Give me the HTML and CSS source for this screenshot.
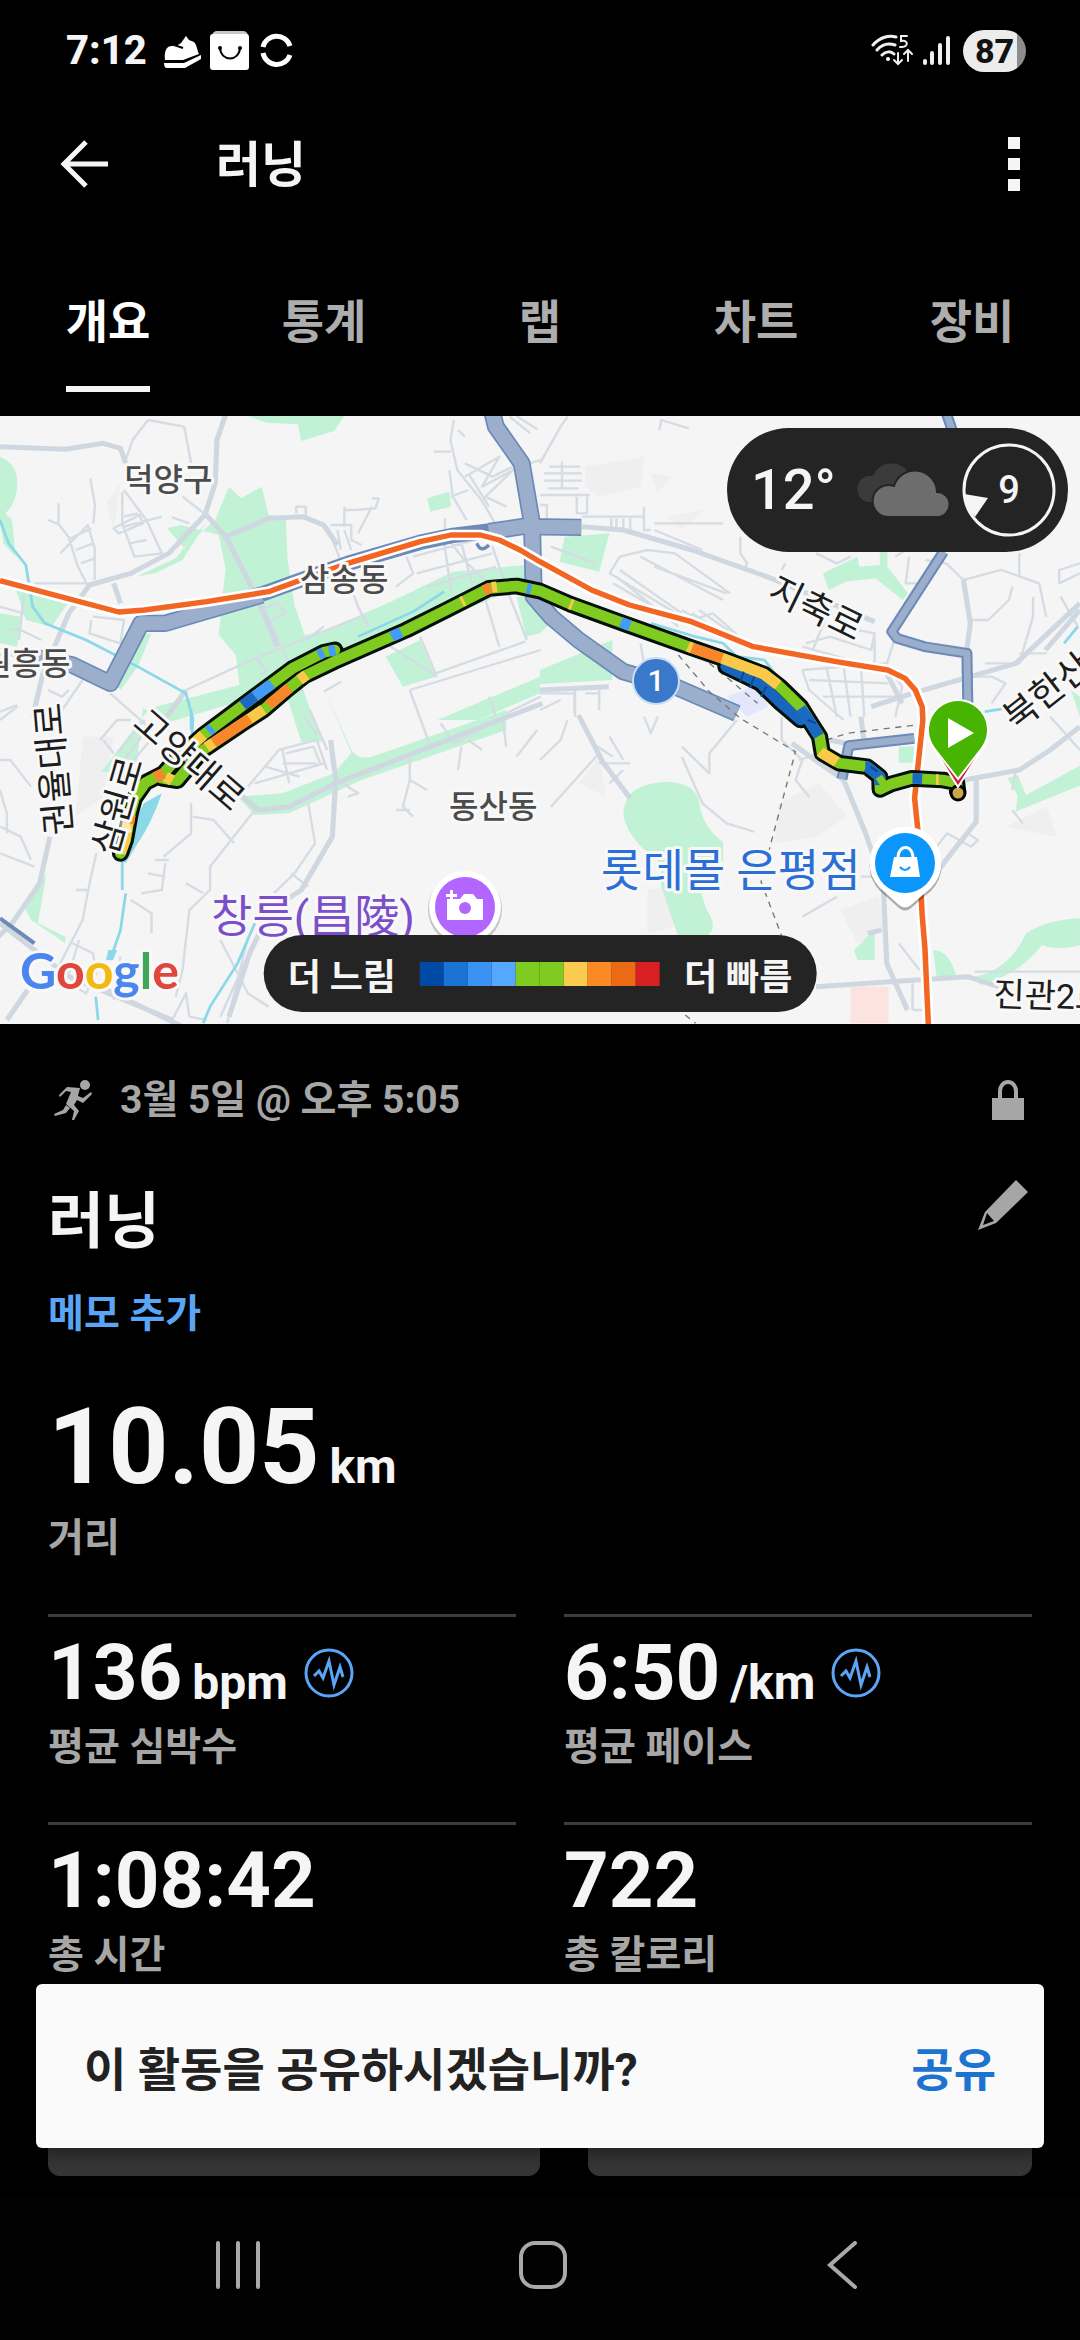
FILE: index.html
```html
<!DOCTYPE html>
<html lang="ko">
<head>
<meta charset="utf-8">
<meta name="viewport" content="width=device-width, initial-scale=1">
<title>러닝</title>
<link rel="stylesheet" href="styles.css">
</head>
<body>
<div class="statusbar">
  <div class="status-group">
    <span class="clock">7:12</span>
    <svg class="status-icons" width="130" height="42" viewBox="0 0 130 42" aria-hidden="true">
      <path fill="#fff" d="M2 30C1 22 3 16 9 16c4 0 7-1 9-3l5-7 3 4 5 2c3 3 3 8 5 12L20 30zM1 33h20l17-8v4L22 38H4c-2 0-3-2-3-5z"/>
      <path d="M11 15l9 3" stroke="#000" stroke-width="2"/>
      <rect x="49" y="1" width="36" height="12" rx="5" fill="#c8c8c8"/>
      <rect x="47" y="4" width="39" height="36" rx="3" fill="#fff"/>
      <path d="M57 18c1 14 19 14 20 0" fill="none" stroke="#000" stroke-width="2"/>
      <circle cx="57" cy="18" r="2"/><circle cx="77" cy="18" r="2"/>
      <path d="M100 17a14 14 0 0 1 27-1M100 23a14 14 0 0 0 27 2" fill="none" stroke="#fff" stroke-width="5"/>
    </svg>
  </div>
  <div class="status-group">
    <svg width="80" height="36" viewBox="0 0 80 36" aria-hidden="true">
      <g fill="none" stroke="#f0f0f0" stroke-width="3" stroke-linecap="round">
        <path d="M2 12C9 4 18 2 25 4M6 17C11 11 18 10 24 12M11 22c4-4 9-4 12-1"/>
        <path d="M27 20v10M23 27l4 4 4-4M37 28V18M33 21l4-4 4 4" stroke-width="2"/>
        <path d="M36 3h-6v5c7-2 8 6 1 6h-2" stroke-width="2"/>
        <path d="M54 28v2M61 20v10M69 12v18M77 5v25" stroke-width="4"/>
      </g>
      <circle cx="17" cy="26" r="2" fill="#fff"/>
    </svg>
    <span class="battery">87</span>
  </div>
</div>

<header class="appbar">
  <button class="icon-button" aria-label="뒤로">
    <svg width="48" height="48" viewBox="0 0 48 48"><path d="M26 2L4 24l22 22M4 24h44" fill="none" stroke="#f5f5f5" stroke-width="5"/></svg>
  </button>
  <h1 class="appbar-title">러닝</h1>
  <button class="icon-button" aria-label="더보기">
    <svg width="12" height="54" viewBox="0 0 12 54"><path d="M0 0h12v12H0zM0 21h12v12H0zM0 42h12v12H0z" fill="#f5f5f5"/></svg>
  </button>
</header>

<nav class="tabs">
  <button class="tab tab-active"><span>개요</span></button>
  <button class="tab"><span>통계</span></button>
  <button class="tab"><span>랩</span></button>
  <button class="tab"><span>차트</span></button>
  <button class="tab"><span>장비</span></button>
</nav>

<main>
<section class="map">
  <svg class="map-canvas" viewBox="0 0 1080 608" role="img" aria-label="경로 지도">
    <rect width="1080" height="608" fill="#f5f5f5"/>
    <g transform="scale(.34435 .33333) translate(0 -18)" fill="none" stroke-linejoin="round">
      <g class="relief">
        <path d="M1700 170l170-30-10 90-120 30-40-30zM1890 190l60 10-40 50zM1940 320l100-20-60 60z"/>
        <path d="M2260 1180l120-60 80 100-90 60-120 20zM1680 1120l60-80 20 120zM1880 1440l150-30-20 130-130 30zM2440 1500l110-40 20 100-80 40zM2920 1250l120-60 30 90zM240 980l90 0-30 180-80 60zM310 280l40-60-20 140z"/>
      </g>
      <g class="park">
        <path d="M720 18h280l-30 45-95 30-10-50-90-5zM0 140q50 20 50 80t-35 90l20 20 10 110-35-40-10-60zM40 520l170 40-60 90-75-20zM0 610l60 10-10 90-50-10z"/>
        <path d="M625 330l40-100 35 35 60-35 20 85 50 10 5 120 20 140 30 90 50-10 200-90 180-90 210-20v60l-260 110-330 150-60 40 60 170h-60l-50-160-330 100-80-40-20 190h-100l80-110 60-80 260-70-10-90-50-60 20-200-20-100-110-30-40 10 50 60-15 10z"/>
        <path d="M600 335l-90 110-115 55 55-10 80-40zM1240 265l65-20 5 45-60 15zM1120 740l100-50 45 110-95 30zM1500 560l68 0v110l-40 10zM440 670l-40 100-50 70-15-20 60-140zM1270 930l298-130v50l-180 80z"/>
        <path d="M1640 380l130-10-30 115-115-30zM2390 490l60-30 40-20 5 30 60-5 0-50 22 0 0 55 60 80-15 20-80-65-85 10-50 25zM1568 780l210-90 0 120-210 12zM1700 740l50-10 30 60zM3110 840l26 20v60zM1568 620l30 20-30 30z"/>
        <path d="M940 830l80 190q20 30 60 20l390-140v60l-420 150-210 100-100 5-50-55 130-10 150-60 50-60z"/>
        <path d="M1820 1170q20-50 120-55 80 5 90 60 10 80 70 120v60h-90q20 70 40 140 40 60 0 85h-80l-50-150 0-70q-110-80-110-160zM2610 1010h50v48h-50zM2950 1205l190-80v-60l-160 90-25-60-30 10 30 50zM2480 1620l60-60v90h-50zM2710 1620q50 0 70 90l-60-10zM2830 1700q100-20 150-130 60-40 156-45v80q-60 20-110 0-60 80-150 110l-30 10zM70 1490l65-100-25 150 80 40 0 20-100-70z"/>
      </g>
      <path d="M2470 1730h110v110h-110z" fill="#fde3e0"/><path d="M2110 860l100-40 20 70-60 30z" fill="#e2e7fb"/>

      <g class="street">
        <path d="M430 30L535 50 555 160M650 18M430 30L385 90 365 150M262 205l14 80-5 55M170 280v62l30 40 25 85 30 60M140 330l32 14M175 430l80-85 20 70v95M205 385l60-30M220 420l50-20M235 460l40-15M355 245v95l35 100 80-10-45-100-65-90M330 355l75-40 10 25-70 30zM360 350l55-15 55-15M375 400l50-10M360 320l40-10M530 260l75 60M500 322l50 18"/>
        <path d="M660 378l100 200 60 140 60 130M750 600l55-20 25 30-60 30M540 840L740 745 1060 615M745 745l30 40-20 10M890 690l50-40M950 350l20 50 70 190 30 60M860 310v-20h28v30M960 345h60l0 45 30 15M1000 290v60M1000 300h30l60-5 10-30h-20M1040 370l40-80M980 360l10 60M1000 360l20 60M940 845l50-30"/>
        <path d="M1318 30l-10 60 20 90 70 90 40 70M1330 60l20 20M1260 125h50M1305 180l10 80 40 70M1350 200l100-60-50 90 90-50-80 80 60 30M1350 160l80 40 60-30M1360 190l60 100M1310 260l50-20M1292 325v50l60 80 60 60M1200 440l180-50M1210 490l220-60M1240 530l200-60M1290 400l20 140M1340 400l30 120M1180 440l20 50-50 40M1568 150l-30 10M1480 20l60 50M1500 18l60 40"/>
        <path d="M1040 590l30 60M1190 840l380-120M1190 840l60 170M1090 680l180 120M1220 680l45 110 260-95M1410 570l40 140M1430 410l50 150 50 130M1420 860l20 60M1470 910l100-50"/>
        <path d="M0 590l70 20M20 660h40l60 30M100 520h150M70 550l-15 140M270 620l90 10-10 70-90-30 5-40M320 850l110 100M180 900l60-90M140 840l40 20 20-20M0 905l50-20"/>
        <path d="M1568 160l60-110 20-30M1632 155v80M1595 170h90M1580 190h110M1580 212h110M1590 235h90M1568 255h145M1568 285h20v50M1675 260v50h30v-50M1690 320h180v-30M1870 290v70h20M1775 325v30M1790 325v30M1810 325v35M1830 325v35M1900 360l140 60M1600 410l130 50M1915 60l5-30 80 25M1900 340l200 0M2150 380l0 50 20 30-10 20"/>
        <path d="M1770 490l30-50 80-20 80 10 80 60 80 60M1770 490l210 130M1790 500l180 150M1800 480l180 130M1780 520l200 120M1860 440l240 130M1900 470l210 80M2010 630l60-20 110 100M1980 600l180 110 140 10M2010 610l130 90M2030 600l110 80"/>
        <path d="M2360 720l60-150M2330 710l240 70M2340 700l70-20 120 40 10-50-50-10M2330 780l240-20 50 70-20 90M2330 780l20 60 100 90M2400 770l30 150M2450 770l20 150M2500 770l10 150M2350 810l230 10M2390 860l230 0M2540 680l0 100M2600 680l-30 100M2640 440l-10 80 60 0M2370 430l60 30 40-20M2600 440l30-20M2270 480l10-20M2960 430v70M2798 510l110-30 110 40 20 100M2798 510l-50-50-60-10M2810 630h60l60-60 10-40M3000 560l0 60-40 140-100 0M2810 800h70l40 20-40 60M3136 460l-60 20 0 40 60-30M3080 560l50 90M2960 730h80"/>
        <path d="M1740 840v60M1568 850h100v60M1670 830v90M1700 850h40M1860 700l10 60M1568 900l60-30"/>
        <path d="M0 930l50-40M0 1050h30l60 80M0 1140l20 70 0 60M0 1250l60 30 30 70M0 1330l100 40M290 990l50-60 40 0M300 990l30 40M340 1030l80-100M360 1050l80-110M380 1060l90-110M555 1180v90l-80 70M560 1220l60 10 60 70M480 1360l-10 80-60 10M430 1390l50 10M450 1350h40M540 1420l50 30M380 1470l60 40 0 60M350 1640l-20 130M210 1600l60 30 10 60-30 60-50-30M230 1590l-30 100M220 1440h40M280 1330l-20 90-20 110-80 160"/>
        <path d="M720 1130l90-110 110-30 30 90M740 1120l200-60M820 1020l20 100M770 1070l100 30M820 1060h100M830 1030l80-20 20 50M880 915l40 60M900 900l50 120M740 1200l-130 170 0 70-60 60-20 180-20 80M895 1180l20 120-60 90-60 60M845 1390l50 40M740 1590l-100 230M720 1580l-60 260M640 1590l80 160 60 40M500 1830l40-80 10 70 50 10"/>
        <path d="M1190 1030v80l-20 80 30 30M1190 1110l50 30M1150 1200h40M1280 940l40 60 70-40M1360 990l40 30M1330 1080l10-70M980 1110l60 40-30 10M1500 1040l60-80M1460 930l10 80"/>
        <path d="M1568 1050l60-60 20-60M1720 1000l60 40M1770 980l40 70M1740 1060h90M1770 1120l40-40M1600 1190l140-160M1980 1010l80 80 0-60 80-100M1980 1040l60 140 70 60 80 25M2270 920l0 70 60 60-20 60 40 50M2320 1050l60-20M1870 920l20 50 20-50M2950 1080l-10 60M2940 1200l30 40M3050 920l86 100M2810 1270l-100 140M2810 1270l30 20-20 20-70-40-60 80M2500 1400h70M2330 1520l100-60M2650 1720v80M2610 1600l60 80M2650 1800h40M2830 1685h306"/>
      </g>

      <g class="road">
        <path d="M0 110l190 8 110-18 50 15 15 45M660 0l-30 90-5 130-30 95-105 115-110 60-120 35-60 85-75 180-30 130M595 310l60 70 60 120 60 130 30 80M655 380l125-55 100-5 60 25 40 60M1690 350l120 10 200 60 230 85M2240 505l300 130"/>
        <path d="M145 1280l-30 140-80 120-60 60M0 1540l200 160 300 130M0 720l60 20M310 1740l220 110M350 580l-20-60M540 840l-70 100M20 1830l60-90"/>
        <path d="M660 1120l90 80 90-10 135-70 500-200 100-40M960 990l15 120-10 170-90 160-90 60-60 130-60 190"/>
        <path d="M1568 840l200-10M1680 915l70 140 80 110M2300 1000l80 60 70 50 60 150 55 160 10 240 60 140M2410 990l90 20M2500 920l10 80M2370 1730l290-20 150-10 90 30M2800 1110l160-30 90-60 86-70M2835 1105l0 130-130 170M2798 510l20 130-20 150M2530 890l120-40 300-90 186-180M2570 780l50 100M2520 1570l40-10M3136 600l-100 120"/>
      </g>

      <g class="water">
        <path d="M0 330l25 70 50 65 20 125 35 50 120 50 150 80 140 80 20 75-5 120-40 80M555 900v60"/>
        <path d="M355 1350v90M365 1450l-15 110-30 90M278 1760l7 70M740 1540l-50 120-80 130-20 50M1040 680l160-75 90-60M1630 560l80 30M1890 640l130 40 80 20 40 40 80 10 60 80M2860 905l60-10M3090 700l40-50"/>
      </g>
      <path d="M470 1150q-30 90-70 150l-35 60-12-10 20-80 45-90zM315 1620h25l-12 30h-20z" fill="#8ad8e8"/>

      <g class="highway-edge">
        <path d="M1428 0l12 50 75 110 30 180 5 220 50 60 80 70 130 95 150 45 180 80"/>
        <path d="M1545 345l-125 20M760 555l-280 85-70 0-90 180-110-55-140-30M1520 350l168 2"/>
        <path d="M1430 362L1310 377 1220 397 1010 460 860 515 740 560" class="highway-narrow"/>
      </g>
      <g class="highway">
        <path d="M1428 0l12 50 75 110 30 180 5 220 50 60 80 70 130 95 150 45 180 80"/>
        <path d="M1545 345l-125 20M760 555l-280 85-70 0-90 180-110-55-140-30M1520 350l168 2"/>
      </g>
      <path d="M1385 400q10 30 35 5" stroke="#6b8ab8" stroke-width="10"/>
      <g class="trunk-edge"><path d="M2745 0l20 60M2740 425l-150 240 15 20 80 25 123 20 3 180M2655 985l-190 22-20 100"/></g>
      <path d="M0 1525l100 75" stroke="#6b8ab8" stroke-width="12"/>
      <g class="trunk"><path d="M2745 0l20 60M2740 425l-150 240 15 20 80 25 123 20 3 180M2655 985l-190 22-20 100"/></g>
      <path d="M1970 735l90 110 90 80 160 100-70 270-30 120 70 190M2060 760l60 50 80 70M2400 990l60-20 200-25M1990 1815l30 25" stroke="#777" stroke-width="4" stroke-dasharray="18 16"/>

      <path class="rail-edge" d="M0 512L345 606 420 600 600 575 780 545 860 515 1010 460 1220 395 1310 375 1395 375 1450 390 1510 420 1568 455 1718 540 1828 585 2008 635 2068 660 2188 710 2428 755 2578 780 2628 805 2658 840 2678 890 2680 930 2663 1095 2656 1165 2665 1255 2678 1515 2686 1615 2696 1845"/>
      <path class="rail" d="M0 512L345 606 420 600 600 575 780 545 860 515 1010 460 1220 395 1310 375 1395 375 1450 390 1510 420 1568 455 1718 540 1828 585 2008 635 2068 660 2188 710 2428 755 2578 780 2628 805 2658 840 2678 890 2680 930 2663 1095 2656 1165 2665 1255 2678 1515 2686 1615 2696 1845"/>

      <g class="route-edge">
        <path d="M350 1330L364 1290 378 1210 390 1165 422 1118 475 1090 505 1055 590 975 700 890 850 775 940 727 972 720 985 745"/>
        <path d="M470 1105L515 1112 590 1020 700 943 765 900 835 838 885 797 970 755 1180 660 1300 598 1420 535 1500 528 1568 543 1658 583 1818 643 2008 713 2098 745 2218 792 2265 830 2325 890 2355 940 2380 980 2388 1030 2438 1060 2518 1070 2555 1100 2556 1138 2588 1122 2648 1105 2738 1110 2778 1118 2781 1145"/>
        <path d="M2108 770L2208 820 2268 880 2325 930"/>
      </g>
      <g class="route">
        <path d="M350 1330L364 1290 378 1210 390 1165 422 1118 475 1090 505 1055 590 975 700 890 850 775 940 727 972 720"/>
        <path d="M2108 770L2208 820 2268 880 2325 930" stroke="#1765bd"/>
        <path d="M470 1105L515 1112 590 1020 700 943 765 900 835 838 885 797 970 755 1180 660 1300 598 1420 535 1500 528 1568 543 1658 583 1818 643 2008 713 2098 745 2218 792 2265 830 2325 890 2355 940 2380 980 2388 1030 2438 1060 2518 1070 2555 1100 2556 1138 2588 1122 2648 1105 2738 1110 2778 1118 2781 1145"/>
      </g>
      <g class="pace">
        <path d="M349 1330L363 1290 376 1210M560 1003L590 975M600 1012L620 998M720 930L765 898M870 810L890 795M480 1100L500 1112M1428 532L1443 530M1340 576L1348 572M1655 582L1663 585M1998 709L2010 714M2095 744L2218 792 2260 825M2382 1025L2388 1030 2430 1056M2718 1109L2726 1109" stroke="#fbc94a"/>
        <path d="M374 1240L378 1215M450 1102L475 1090M620 998L700 943 725 926M780 885L840 834M1405 542L1425 533M2010 714L2097 745" stroke="#f9862a"/>
        <path d="M605 964L617 954M740 859L790 821M925 735L940 727M955 724L974 720M1137 680L1165 667M1530 535L1542 538M1803 637L1830 647" stroke="#439bf7"/>
        <path d="M705 886L740 859M2325 895L2355 940 2378 978M2513 1070L2518 1070 2555 1100 2556 1125M2650 1105L2678 1106" stroke="#1a69c4"/>
      </g>
      <path d="M2160 785l-10 30M2190 800l-12 34M2225 830l-15 30M2345 930l25 10M2528 1070l20 15" stroke="#0e4890" stroke-width="6"/>
      <path d="M2552 1100l20 30" stroke="#7fcb1f" stroke-width="22"/>
      <path d="M520 1010l40 50M350 1210l20 60" stroke="#fff" stroke-opacity=".55" stroke-width="30"/>
    </g>

    <g class="place">
      <text x="124" y="75">덕양구</text><text x="300" y="175">삼송동</text><text x="-18" y="259">원흥동</text><text x="449" y="402">동산동</text>
    </g>
    <g class="road-name">
      <text transform="translate(766 182) rotate(26)">지축로</text>
      <text transform="translate(1016 316) rotate(-38)">북한산로</text>
      <text transform="translate(131 310) rotate(41)">고양대로</text>
      <text transform="translate(116 441) rotate(-74)">삼원로</text>
      <text transform="translate(72 418) rotate(-95)">권율대로</text>
      <text class="small-road" transform="translate(993 590) rotate(2)">진관2로</text>
    </g>
    <text class="poi poi-sight" x="211" y="517">창릉(昌陵)</text>
    <text class="poi poi-shop" x="601" y="471">롯데몰 은평점</text>

    <circle cx="465" cy="493" r="37" fill="#000" opacity=".2"/><circle cx="465" cy="491" r="36" fill="#fff"/><circle cx="465" cy="491" r="30" fill="#b266ff"/>
    <path d="M447 483h13l4-5h9l4 5h6v21h-36zM446 478h4v-4h3v4h4v3h-4v4h-3v-4h-4z" fill="#fff"/><circle cx="465" cy="492" r="6" fill="#b266ff"/>

    <path d="M899 489l-19-17a36 36 0 1 1 51 0l-20 17q-6 5-12 0z" fill="#000" opacity=".3" transform="translate(0 3)"/>
    <path d="M899 489l-19-17a36 36 0 1 1 51 0l-20 17q-6 5-12 0z" fill="#fff"/><circle cx="905" cy="447" r="30" fill="#0b96fb"/>
    <path d="M894 441h23l3 20h-30z" fill="#fff"/><path d="M898 442c0-14 15-14 15 0" fill="none" stroke="#fff" stroke-width="3"/><path d="M900 451q5 6 10 0" fill="none" stroke="#0b96fb" stroke-width="2"/>

    <circle cx="656" cy="265" r="23" fill="#3a78c9" stroke="#c9dcf7" stroke-width="2"/><text class="shield" x="656" y="275">1</text>

    <circle cx="958" cy="377" r="7" fill="#c9a84c" stroke="#000" stroke-width="3"/>
    <path d="M958 371l-24-38a30 30 0 1 1 48 0z" fill="#d51a42" stroke="#fff" stroke-width="2"/>
    <path d="M958 363l-24-31a30 30 0 1 1 48 0z" fill="#46b400" stroke="#fff" stroke-width="2"/><path d="M948 302l26 15-26 15z" fill="#fff"/>

    <text class="google" x="20" y="573"><tspan fill="#4a86ee">G</tspan><tspan fill="#e0473c">o</tspan><tspan fill="#f2b90f">o</tspan><tspan fill="#4a86ee">g</tspan><tspan fill="#3fa757">l</tspan><tspan fill="#e0473c">e</tspan></text>
  </svg>

  <div class="weather">
    <span class="temperature">12°</span>
    <svg width="94" height="54" viewBox="0 0 94 54" aria-hidden="true">
      <path d="M12 39a13 13 0 0 1 5-26 20 20 0 0 1 35-4L20 39z" fill="#3b3b3b"/>
      <path d="M34 54a16 16 0 1 1 4-31 22 22 0 0 1 43 6 12 12 0 0 1 0 25z" fill="#6d6d6d" stroke="#242424" stroke-width="2"/>
    </svg>
    <div class="wind">
      <svg class="wind-ring" width="94" height="94" viewBox="0 0 94 94" aria-hidden="true"><circle cx="47" cy="47" r="45" fill="none" stroke="#f5f5f5" stroke-width="3"/><path d="M2 51l24 4-13 19q-9-9-11-23z" fill="#f5f5f5"/></svg>
      <span>9</span>
    </div>
  </div>

  <div class="legend">
    <span>더 느림</span>
    <div class="scale"><i class="p1"></i><i class="p2"></i><i class="p3"></i><i class="p4"></i><i class="p5"></i><i class="p5"></i><i class="p6"></i><i class="p7"></i><i class="p8"></i><i class="p9"></i></div>
    <span>더 빠름</span>
  </div>
</section>

<section class="summary">
  <div class="meta">
    <svg width="40" height="40" viewBox="0 0 40 40" aria-hidden="true"><circle cx="31" cy="5" r="5" fill="#a6a6a6"/><path d="M13 7l13 1-2 8 5 2 8-6 1 2-9 9-6-3-3 5 5 6-5 9-2 0 2-9-8-7 5-12-5-1-6 6-1-2zM12 25l4 3-4 5-11 3-1-2 9-4z" fill="#a6a6a6"/></svg>
    <p class="date">3월 5일 @ 오후 5:05</p>
    <svg width="32" height="40" viewBox="0 0 32 40" role="img" aria-label="비공개"><path d="M0 18h32v22H0z" fill="#a6a6a6"/><path d="M8 19v-8a8 9 0 0 1 16 0v8" fill="none" stroke="#a6a6a6" stroke-width="4"/></svg>
  </div>
  <div class="title-row">
    <h2 class="title">러닝</h2>
    <button class="icon-button edit" aria-label="편집"><svg width="50" height="50" viewBox="0 0 50 50"><path d="M38 0l12 12-32 31-18 7 7-18zM9 33l-4 12 11-4z" fill="#a6a6a6" fill-rule="evenodd"/></svg></button>
  </div>
  <a class="note" href="#">메모 추가</a>

  <p class="value value-large">10.05 <small>km</small></p>
  <p class="label label-large">거리</p>

  <div class="stats">
    <div class="stat"><p class="value">136 <small>bpm</small><svg class="pulse" width="50" height="50" viewBox="0 0 50 50" aria-hidden="true"><circle cx="25" cy="25" r="23" fill="none" stroke="#5aa5f5" stroke-width="3"/><path d="M10 28l5-5 4 7 6-17 5 24 6-18 3 10" fill="none" stroke="#5aa5f5" stroke-width="3"/></svg></p><p class="label">평균 심박수</p></div>
    <div class="stat"><p class="value">6:50 <small>/km</small><svg class="pulse" width="50" height="50" viewBox="0 0 50 50" aria-hidden="true"><circle cx="25" cy="25" r="23" fill="none" stroke="#5aa5f5" stroke-width="3"/><path d="M10 28l5-5 4 7 6-17 5 24 6-18 3 10" fill="none" stroke="#5aa5f5" stroke-width="3"/></svg></p><p class="label">평균 페이스</p></div>
    <div class="stat"><p class="value">1:08:42</p><p class="label">총 시간</p></div>
    <div class="stat"><p class="value">722</p><p class="label">총 칼로리</p></div>
  </div>
  <div class="actions">
    <button class="action action-wide" aria-label="활동 보기"></button>
    <button class="action" aria-label="추가"></button>
  </div>
</section>

<div class="snackbar" role="status">
  <span>이 활동을 공유하시겠습니까?</span>
  <button class="share">공유</button>
</div>
</main>

<footer class="navbar">
  <button class="icon-button" aria-label="최근 앱"><svg width="44" height="48" viewBox="0 0 44 48"><path d="M2 2v44M22 2v44M42 2v44" stroke="#a9a9a9" stroke-width="4" stroke-linecap="round"/></svg></button>
  <button class="icon-button" aria-label="홈"><svg width="48" height="48" viewBox="0 0 48 48"><rect x="2" y="2" width="44" height="44" rx="14" fill="none" stroke="#a9a9a9" stroke-width="4"/></svg></button>
  <button class="icon-button" aria-label="뒤로 가기"><svg width="32" height="48" viewBox="0 0 32 48"><path d="M29 2L4 24l25 22" fill="none" stroke="#a9a9a9" stroke-width="4" stroke-linecap="round"/></svg></button>
</footer>
</body>
</html>
```
FILE: styles.css
```css
* { box-sizing: border-box; }
body {
  margin: 0;
  min-height: 100vh;
  display: flex;
  flex-direction: column;
  background: #000;
  color: #f5f5f5;
  font-family: Roboto, "Noto Sans CJK KR", sans-serif;
}
h1, h2, p { margin: 0; }
button { border: 0; padding: 0; background: none; color: inherit; font: inherit; }
svg { display: block; flex: none; }
.icon-button { display: flex; }

.statusbar {
  height: 102px;
  padding: 0 54px 0 66px;
  display: flex;
  justify-content: space-between;
  align-items: center;
}
.status-group { display: flex; align-items: center; gap: 12px; }
.clock { font-size: 40px; font-weight: 800; line-height: 48px; }
.status-icons { margin-left: 4px; }
.battery {
  width: 63px;
  height: 42px;
  border-radius: 21px;
  background: linear-gradient(90deg, #ececec 54px, #8d8d8d 54px);
  color: #111;
  font: 800 34px/42px Roboto, sans-serif;
  text-align: center;
}

.appbar { height: 124px; padding: 0 60px; display: flex; align-items: center; }
.appbar-title { flex: 1; margin-left: 108px; padding-top: 4px; font-size: 49px; line-height: 72px; font-weight: 700; }

.tabs { display: grid; grid-template-columns: repeat(5, 1fr); justify-items: center; padding-bottom: 24px; }
.tab {
  padding: 68px 0 36px;
  border-bottom: 6px solid transparent;
  color: #adadad;
  font-size: 46px;
  line-height: 56px;
  font-weight: 700;
}
.tab-active { color: #fff; border-bottom-color: #f5f5f5; }

main { position: relative; flex: 1; }
.map { position: relative; }
.map-canvas { width: 100%; height: auto; }
.map-canvas text { font-family: Roboto, "Noto Sans CJK KR", sans-serif; paint-order: stroke; stroke: #f8f8f8; stroke-width: 6px; stroke-linejoin: round; }
.relief { fill: #efefef; }
.park { fill: #c1f2d5; }
.street { stroke: #d5dce3; stroke-width: 7; }
.road { stroke: #cfd8e0; stroke-width: 15; }
.water { stroke: #8ad8e8; stroke-width: 8; }
.highway-edge { stroke: #6b8ab8; stroke-width: 52; }
.highway-narrow { stroke-width: 46; }
.highway { stroke: #9bafcc; stroke-width: 42; }
.trunk-edge { stroke: #6b8ab8; stroke-width: 32; }
.trunk { stroke: #9bafcc; stroke-width: 20; }
.rail-edge { stroke: #fff; stroke-width: 32; }
.rail { stroke: #f26522; stroke-width: 16; }
.route-edge { stroke: #06100a; stroke-width: 50; stroke-linecap: round; }
.route { stroke: #7fcb1f; stroke-width: 32; stroke-linecap: round; }
.pace { stroke-width: 32; }
.place { fill: #4b4b4b; font-size: 32px; font-weight: 500; }
.road-name { fill: #1d1d1d; font-size: 36px; }
.road-name .small-road { font-size: 34px; }
.poi { font-size: 45px; }
.poi-sight { fill: #7b4fc9; }
.poi-shop { fill: #2b6fd6; }
.map-canvas .shield { fill: #fff; stroke: none; font-size: 30px; font-weight: 500; text-anchor: middle; }
.map-canvas .google { font: 700 50px Lato, sans-serif; }

.weather {
  position: absolute;
  top: 12px;
  right: 12px;
  height: 124px;
  padding: 0 12px 0 24px;
  border-radius: 62px;
  background: #242424;
  display: flex;
  align-items: center;
}
.temperature { font-size: 56px; font-weight: 500; margin-right: 20px; }
.wind { position: relative; width: 94px; height: 94px; margin-left: 12px; display: grid; place-items: center; font-size: 38px; font-weight: 500; }
.wind-ring { position: absolute; inset: 0; }

.legend {
  position: absolute;
  left: 50%;
  bottom: 12px;
  transform: translateX(-50%);
  height: 77px;
  padding: 0 24px;
  border-radius: 39px;
  background: #242424;
  display: flex;
  align-items: center;
  gap: 24px;
  font-size: 36px;
  font-weight: 700;
  white-space: nowrap;
}
.scale { display: flex; }
.scale i { width: 24px; height: 24px; }
.p1 { background: #0049a5; }
.p2 { background: #1a73d5; }
.p3 { background: #3a92f5; }
.p4 { background: #55a8ff; }
.p5 { background: #7fcb1f; }
.p6 { background: #fbcb4f; }
.p7 { background: #fb8a25; }
.p8 { background: #ec6a13; }
.p9 { background: #d82023; }

.summary { padding: 48px 48px 20px; }
.meta { height: 56px; padding: 0 8px 0 6px; display: flex; align-items: center; }
.date { flex: 1; margin-left: 26px; color: #a6a6a6; font-size: 39px; line-height: 56px; font-weight: 700; }
.title-row { margin-top: 48px; display: flex; justify-content: space-between; padding-right: 4px; }
.title { padding-top: 4px; font-size: 61px; line-height: 84px; font-weight: 700; }
.edit { margin-top: 4px; }
.note { display: block; margin-top: 22px; color: #5aa5f5; font-size: 39px; line-height: 56px; font-weight: 700; text-decoration: none; }
.value { font-size: 78px; line-height: 92px; font-weight: 700; white-space: nowrap; display: flex; align-items: baseline; gap: 10px; }
.value small { font-size: 48px; line-height: 48px; }
.value-large { margin-top: 44px; font-size: 105px; line-height: 124px; }
.label { color: #a6a6a6; font-size: 39px; line-height: 56px; font-weight: 700; }
.label-large { margin-bottom: 48px; }
.stats { display: grid; grid-template-columns: 1fr 1fr; column-gap: 48px; }
.stat { height: 208px; padding-top: 10px; border-top: 3px solid #3c3c3c; }
.pulse { align-self: center; margin-left: 6px; }
.actions { display: flex; gap: 48px; margin-top: 26px; }
.action { flex: 1; height: 120px; border-radius: 12px; background: #363636; }
.action-wide { flex: 0 0 50%; }

.snackbar {
  position: absolute;
  left: 36px;
  right: 36px;
  bottom: 48px;
  height: 164px;
  padding: 0 48px;
  border-radius: 6px;
  background: #fafafa;
  box-shadow: 0 6px 18px rgba(0, 0, 0, .4);
  color: #222;
  display: flex;
  align-items: center;
  justify-content: space-between;
  font-size: 46px;
  font-weight: 700;
}
.share { color: #1d74d0; }

.navbar { height: 144px; padding: 0 222px 6px 216px; display: flex; align-items: center; justify-content: space-between; background: #020202; }
```
